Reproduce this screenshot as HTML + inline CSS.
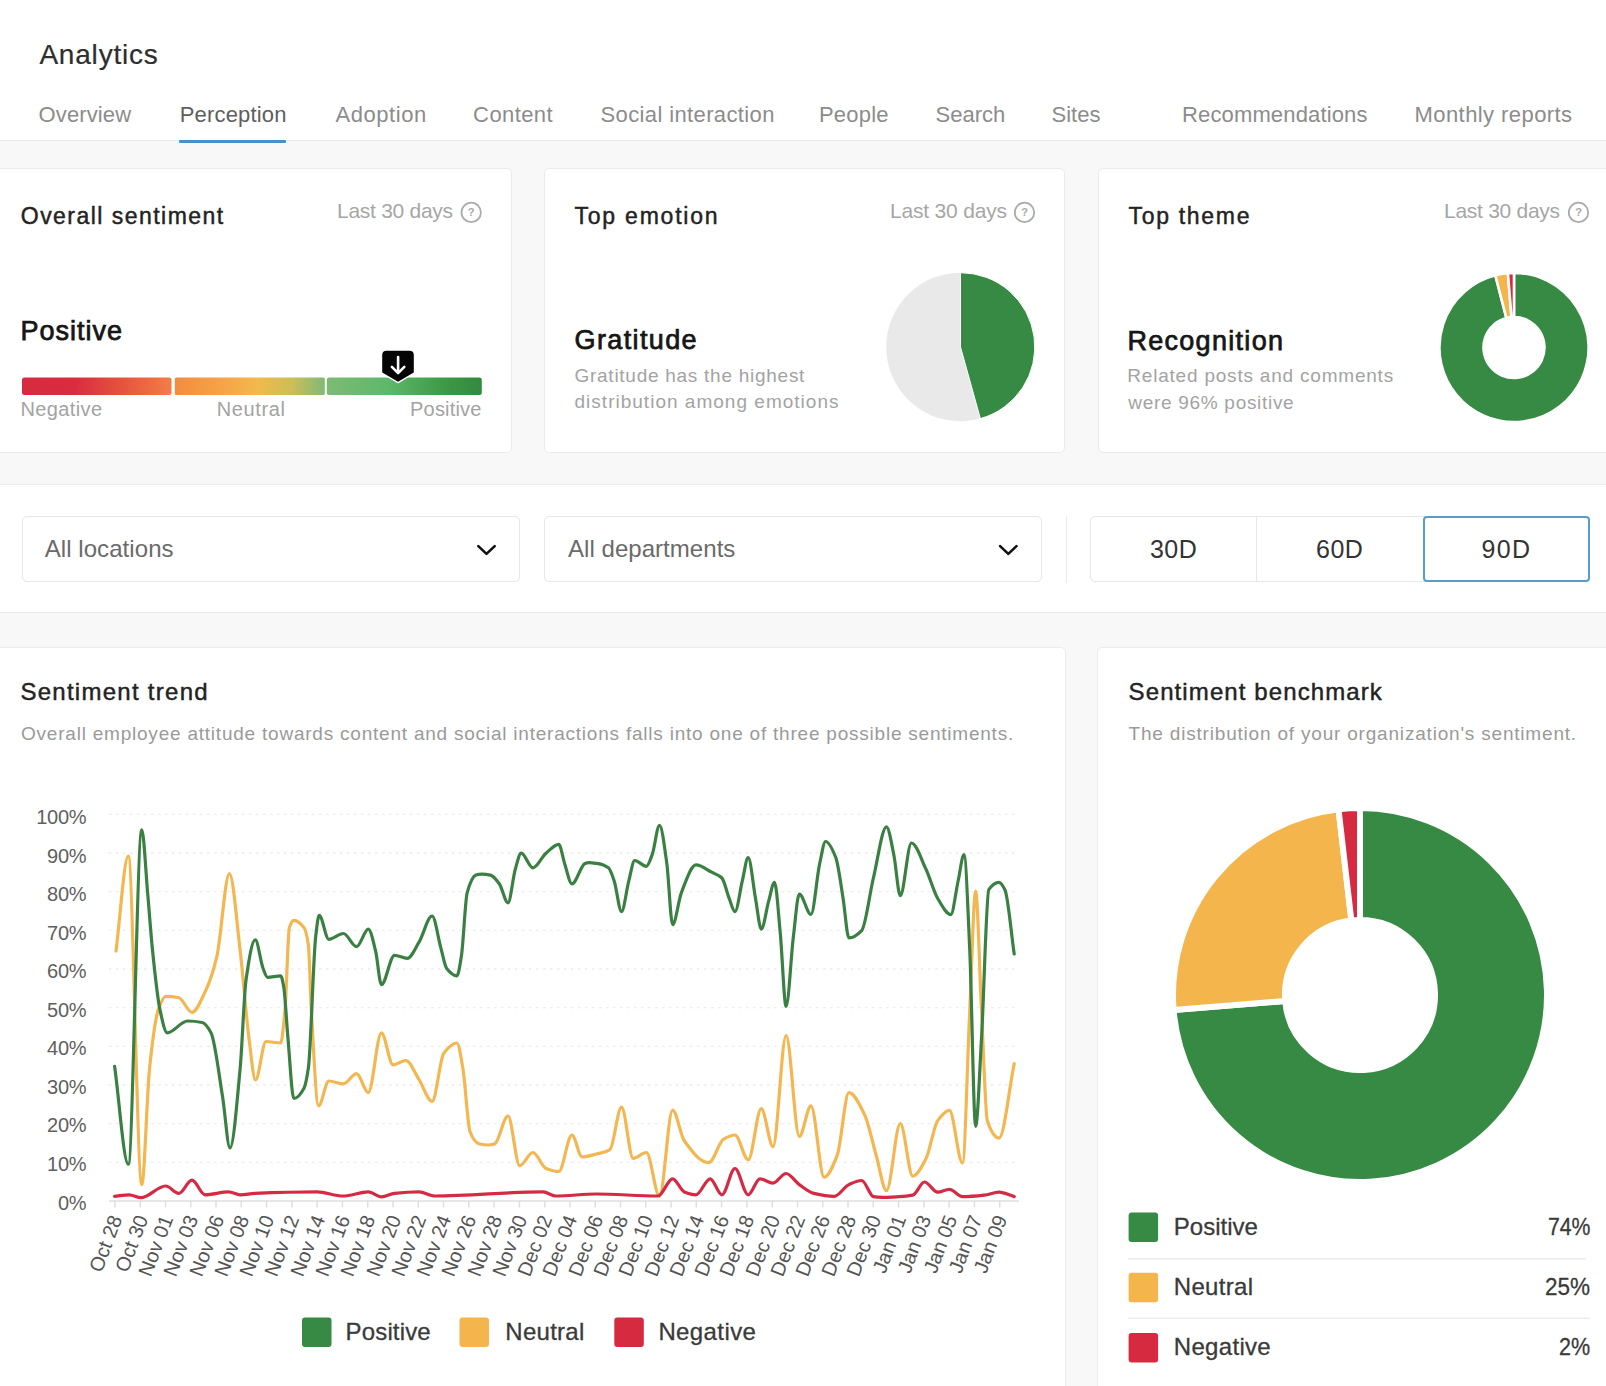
<!DOCTYPE html>
<html><head><meta charset="utf-8">
<style>
*{margin:0;padding:0;box-sizing:border-box}
html,body{width:1606px;height:1386px;overflow:hidden;background:#f8f8f8;font-family:"Liberation Sans",sans-serif}
.a{position:absolute}
.t{position:absolute;white-space:nowrap}
.card{position:absolute;background:#fff;border:1px solid #ebebeb;border-radius:5px}
svg{position:absolute;left:0;top:0;overflow:visible}
</style></head><body>

<div class="a" style="left:0;top:0;width:1606px;height:141px;background:#fff;border-bottom:1px solid #ececec"></div>
<div class="a" style="left:179px;top:140px;width:107px;height:3px;background:#4592c8;border-radius:1px"></div>
<div class="card" style="left:-8px;top:168px;width:520px;height:285px"></div>
<div class="card" style="left:544px;top:168px;width:521px;height:285px"></div>
<div class="card" style="left:1098px;top:168px;width:530px;height:285px"></div>
<div class="a" style="left:0;top:484px;width:1606px;height:129px;background:#fff;border-top:1px solid #ececec;border-bottom:1px solid #ececec"></div>
<div class="a" style="left:22px;top:516px;width:498px;height:66px;border:1px solid #e7e7e7;border-radius:5px"></div>
<div class="a" style="left:544px;top:516px;width:498px;height:66px;border:1px solid #e7e7e7;border-radius:5px"></div>
<div class="a" style="left:1066px;top:516px;width:1px;height:67px;background:#ebebeb"></div>
<div class="a" style="left:1090px;top:516px;width:500px;height:66px;border:1px solid #e7e7e7;border-radius:5px"></div>
<div class="a" style="left:1256px;top:517px;width:1px;height:64px;background:#e7e7e7"></div>
<div class="a" style="left:1423px;top:516px;width:167px;height:66px;border:2px solid #559ecb;border-radius:4px"></div>
<div class="card" style="left:-8px;top:647px;width:1074px;height:770px"></div>
<div class="card" style="left:1097px;top:647px;width:530px;height:770px"></div>
<svg width="1606" height="1386" viewBox="0 0 1606 1386">
<defs><linearGradient id="g1" x1="0" x2="1"><stop offset="0" stop-color="#d62a40"/><stop offset="0.35" stop-color="#d92c3f"/><stop offset="0.65" stop-color="#e5513c"/><stop offset="1" stop-color="#f47d47"/></linearGradient><linearGradient id="g2" x1="0" x2="1"><stop offset="0" stop-color="#f38c3f"/><stop offset="0.35" stop-color="#f5a64a"/><stop offset="0.55" stop-color="#f2b94c"/><stop offset="0.78" stop-color="#cdbd58"/><stop offset="1" stop-color="#80bb74"/></linearGradient><linearGradient id="g3" x1="0" x2="1"><stop offset="0" stop-color="#7dbb73"/><stop offset="0.4" stop-color="#5db86a"/><stop offset="0.75" stop-color="#3d9a46"/><stop offset="1" stop-color="#338a3e"/></linearGradient></defs>
<rect x="22" y="377.5" width="149.5" height="17.5" rx="2.5" fill="url(#g1)"/>
<rect x="174.8" y="377.5" width="150" height="17.5" rx="1.5" fill="url(#g2)"/>
<rect x="326.8" y="377.5" width="155" height="17.5" rx="2.5" fill="url(#g3)"/>
<path d="M386.5,350 H409.5 Q414.5,350 414.5,355 V372.9 L398.1,382.6 L381.5,372.9 V355 Q381.5,350 386.5,350 Z" fill="#050505" stroke="#fff" stroke-width="1.4"/>
<path d="M398.1,357 V372.8 M391.9,366.9 L398.1,373.1 L404.3,366.9" fill="none" stroke="#fff" stroke-width="2.6" stroke-linecap="round" stroke-linejoin="round"/>
<circle cx="471.2" cy="212.4" r="9.7" fill="none" stroke="#ababab" stroke-width="1.8"/>
<text x="471.2" y="216.3" font-size="11" font-weight="bold" fill="#a8a8a8" text-anchor="middle" font-family="Liberation Sans">?</text>
<circle cx="1024.5" cy="212.4" r="9.7" fill="none" stroke="#ababab" stroke-width="1.8"/>
<text x="1024.5" y="216.3" font-size="11" font-weight="bold" fill="#a8a8a8" text-anchor="middle" font-family="Liberation Sans">?</text>
<circle cx="1578.5" cy="212.4" r="9.7" fill="none" stroke="#ababab" stroke-width="1.8"/>
<text x="1578.5" y="216.3" font-size="11" font-weight="bold" fill="#a8a8a8" text-anchor="middle" font-family="Liberation Sans">?</text>
<circle cx="960.5" cy="347" r="74.3" fill="#e9e9e9"/>
<path d="M960.5,347 L960.50,272.70 A74.3,74.3 0 0 1 980.36,418.60 Z" fill="#368a43" stroke="#fff" stroke-width="1"/>
<path d="M1514.00,272.90 A74.6,74.6 0 1 1 1495.32,275.28 L1506.36,317.97 A30.5,30.5 0 1 0 1514.00,317.00 Z" fill="#368a43" stroke="#fff" stroke-width="2.6" stroke-linejoin="round"/>
<path d="M1495.32,275.28 A74.6,74.6 0 0 1 1507.89,273.15 L1511.50,317.10 A30.5,30.5 0 0 0 1506.36,317.97 Z" fill="#f4b64c" stroke="#fff" stroke-width="2.6" stroke-linejoin="round"/>
<path d="M1507.89,273.15 A74.6,74.6 0 0 1 1514.00,272.90 L1514.00,317.00 A30.5,30.5 0 0 0 1511.50,317.10 Z" fill="#d62a40" stroke="#fff" stroke-width="2.6" stroke-linejoin="round"/>
<path d="M478.3,546.1 L486.5,553.9 L494.7,546.1" fill="none" stroke="#111" stroke-width="2.6" stroke-linecap="round" stroke-linejoin="round"/>
<path d="M1000.0999999999999,546.1 L1008.3,553.9 L1016.5,546.1" fill="none" stroke="#111" stroke-width="2.6" stroke-linecap="round" stroke-linejoin="round"/>
<path d="M1360.00,808.00 A187,187 0 1 1 1173.60,1010.00 L1285.24,1001.01 A75,75 0 1 0 1360.00,920.00 Z" fill="#368a43" stroke="#fff" stroke-width="6" stroke-linejoin="round"/>
<path d="M1173.60,1010.00 A187,187 0 0 1 1338.51,809.24 L1351.38,920.50 A75,75 0 0 0 1285.24,1001.01 Z" fill="#f4b64c" stroke="#fff" stroke-width="6" stroke-linejoin="round"/>
<path d="M1338.51,809.24 A187,187 0 0 1 1360.00,808.00 L1360.00,920.00 A75,75 0 0 0 1351.38,920.50 Z" fill="#d62a40" stroke="#fff" stroke-width="6" stroke-linejoin="round"/>
<rect x="302" y="1317.6" width="29.5" height="29.5" rx="3" fill="#368a43"/>
<rect x="459.5" y="1317.6" width="29.5" height="29.5" rx="3" fill="#f4b64c"/>
<rect x="614.3" y="1317.6" width="29.5" height="29.5" rx="3" fill="#d62a40"/>
<rect x="1128.6" y="1212.5" width="29.5" height="29.5" rx="3" fill="#368a43"/>
<rect x="1128.6" y="1272.8" width="29.5" height="29.5" rx="3" fill="#f4b64c"/>
<rect x="1128.6" y="1333" width="29.5" height="29.5" rx="3" fill="#d62a40"/>
<rect x="1128" y="1258" width="458" height="1.5" fill="#ececec"/>
<rect x="1128" y="1317.5" width="462" height="1.5" fill="#ececec"/>
<line x1="109" y1="814.3" x2="1017" y2="814.3" stroke="#ececec" stroke-width="1.3" stroke-dasharray="2.5 4.5"/>
<line x1="109" y1="853.0" x2="1017" y2="853.0" stroke="#ececec" stroke-width="1.3" stroke-dasharray="2.5 4.5"/>
<line x1="109" y1="891.6" x2="1017" y2="891.6" stroke="#ececec" stroke-width="1.3" stroke-dasharray="2.5 4.5"/>
<line x1="109" y1="930.3" x2="1017" y2="930.3" stroke="#ececec" stroke-width="1.3" stroke-dasharray="2.5 4.5"/>
<line x1="109" y1="969.0" x2="1017" y2="969.0" stroke="#ececec" stroke-width="1.3" stroke-dasharray="2.5 4.5"/>
<line x1="109" y1="1007.6" x2="1017" y2="1007.6" stroke="#ececec" stroke-width="1.3" stroke-dasharray="2.5 4.5"/>
<line x1="109" y1="1046.3" x2="1017" y2="1046.3" stroke="#ececec" stroke-width="1.3" stroke-dasharray="2.5 4.5"/>
<line x1="109" y1="1085.0" x2="1017" y2="1085.0" stroke="#ececec" stroke-width="1.3" stroke-dasharray="2.5 4.5"/>
<line x1="109" y1="1123.7" x2="1017" y2="1123.7" stroke="#ececec" stroke-width="1.3" stroke-dasharray="2.5 4.5"/>
<line x1="109" y1="1162.3" x2="1017" y2="1162.3" stroke="#ececec" stroke-width="1.3" stroke-dasharray="2.5 4.5"/>
<line x1="109" y1="1201" x2="1019" y2="1201" stroke="#dedede" stroke-width="1.5"/>
<line x1="114.9" y1="1201" x2="114.9" y2="1207.5" stroke="#dedede" stroke-width="1.5"/>
<line x1="140.2" y1="1201" x2="140.2" y2="1207.5" stroke="#dedede" stroke-width="1.5"/>
<line x1="165.5" y1="1201" x2="165.5" y2="1207.5" stroke="#dedede" stroke-width="1.5"/>
<line x1="190.7" y1="1201" x2="190.7" y2="1207.5" stroke="#dedede" stroke-width="1.5"/>
<line x1="216.0" y1="1201" x2="216.0" y2="1207.5" stroke="#dedede" stroke-width="1.5"/>
<line x1="241.3" y1="1201" x2="241.3" y2="1207.5" stroke="#dedede" stroke-width="1.5"/>
<line x1="266.6" y1="1201" x2="266.6" y2="1207.5" stroke="#dedede" stroke-width="1.5"/>
<line x1="291.9" y1="1201" x2="291.9" y2="1207.5" stroke="#dedede" stroke-width="1.5"/>
<line x1="317.1" y1="1201" x2="317.1" y2="1207.5" stroke="#dedede" stroke-width="1.5"/>
<line x1="342.4" y1="1201" x2="342.4" y2="1207.5" stroke="#dedede" stroke-width="1.5"/>
<line x1="367.7" y1="1201" x2="367.7" y2="1207.5" stroke="#dedede" stroke-width="1.5"/>
<line x1="393.0" y1="1201" x2="393.0" y2="1207.5" stroke="#dedede" stroke-width="1.5"/>
<line x1="418.3" y1="1201" x2="418.3" y2="1207.5" stroke="#dedede" stroke-width="1.5"/>
<line x1="443.5" y1="1201" x2="443.5" y2="1207.5" stroke="#dedede" stroke-width="1.5"/>
<line x1="468.8" y1="1201" x2="468.8" y2="1207.5" stroke="#dedede" stroke-width="1.5"/>
<line x1="494.1" y1="1201" x2="494.1" y2="1207.5" stroke="#dedede" stroke-width="1.5"/>
<line x1="519.4" y1="1201" x2="519.4" y2="1207.5" stroke="#dedede" stroke-width="1.5"/>
<line x1="544.7" y1="1201" x2="544.7" y2="1207.5" stroke="#dedede" stroke-width="1.5"/>
<line x1="569.9" y1="1201" x2="569.9" y2="1207.5" stroke="#dedede" stroke-width="1.5"/>
<line x1="595.2" y1="1201" x2="595.2" y2="1207.5" stroke="#dedede" stroke-width="1.5"/>
<line x1="620.5" y1="1201" x2="620.5" y2="1207.5" stroke="#dedede" stroke-width="1.5"/>
<line x1="645.8" y1="1201" x2="645.8" y2="1207.5" stroke="#dedede" stroke-width="1.5"/>
<line x1="671.1" y1="1201" x2="671.1" y2="1207.5" stroke="#dedede" stroke-width="1.5"/>
<line x1="696.3" y1="1201" x2="696.3" y2="1207.5" stroke="#dedede" stroke-width="1.5"/>
<line x1="721.6" y1="1201" x2="721.6" y2="1207.5" stroke="#dedede" stroke-width="1.5"/>
<line x1="746.9" y1="1201" x2="746.9" y2="1207.5" stroke="#dedede" stroke-width="1.5"/>
<line x1="772.2" y1="1201" x2="772.2" y2="1207.5" stroke="#dedede" stroke-width="1.5"/>
<line x1="797.5" y1="1201" x2="797.5" y2="1207.5" stroke="#dedede" stroke-width="1.5"/>
<line x1="822.7" y1="1201" x2="822.7" y2="1207.5" stroke="#dedede" stroke-width="1.5"/>
<line x1="848.0" y1="1201" x2="848.0" y2="1207.5" stroke="#dedede" stroke-width="1.5"/>
<line x1="873.3" y1="1201" x2="873.3" y2="1207.5" stroke="#dedede" stroke-width="1.5"/>
<line x1="898.6" y1="1201" x2="898.6" y2="1207.5" stroke="#dedede" stroke-width="1.5"/>
<line x1="923.9" y1="1201" x2="923.9" y2="1207.5" stroke="#dedede" stroke-width="1.5"/>
<line x1="949.1" y1="1201" x2="949.1" y2="1207.5" stroke="#dedede" stroke-width="1.5"/>
<line x1="974.4" y1="1201" x2="974.4" y2="1207.5" stroke="#dedede" stroke-width="1.5"/>
<line x1="999.7" y1="1201" x2="999.7" y2="1207.5" stroke="#dedede" stroke-width="1.5"/>
<path d="M116.0,951.0 C120.1,919.4 124.2,856.1 128.3,856.1 C132.8,856.1 137.3,1184.6 141.8,1184.6 C144.4,1184.6 147.0,1091.9 149.6,1067.8 C152.5,1040.6 155.5,1017.5 158.4,1009.4 C160.8,1002.6 163.3,996.3 165.7,996.3 C170.1,996.3 174.4,996.8 178.8,997.7 C183.2,998.6 187.6,1012.3 192.0,1012.3 C196.4,1012.3 200.7,1000.9 205.1,991.9 C209.0,983.9 212.9,972.8 216.8,956.8 C221.0,939.6 225.2,873.6 229.4,873.6 C233.0,873.6 236.6,920.8 240.2,951.0 C243.1,975.6 246.1,1016.1 249.0,1038.6 C251.2,1055.2 253.3,1080.0 255.5,1080.0 C259.0,1080.0 262.5,1041.5 266.0,1041.5 C270.9,1041.5 275.8,1043.0 280.7,1043.0 C282.1,1043.0 283.6,1025.1 285.0,1009.4 C286.5,993.3 287.9,932.1 289.4,927.6 C290.9,923.1 292.3,920.3 293.8,920.3 C297.2,920.3 300.6,923.1 304.0,927.6 C305.5,929.6 306.9,934.8 308.4,945.2 C309.4,952.1 310.3,992.8 311.3,1009.4 C313.7,1051.2 316.2,1105.8 318.6,1105.8 C322.0,1105.8 325.4,1081.0 328.8,1081.0 C333.7,1081.0 338.5,1083.9 343.4,1083.9 C347.8,1083.9 352.2,1073.6 356.6,1073.6 C360.5,1073.6 364.4,1092.6 368.3,1092.6 C372.7,1092.6 377.0,1032.8 381.4,1032.8 C385.3,1032.8 389.2,1064.9 393.1,1064.9 C397.3,1064.9 401.6,1060.5 405.8,1060.5 C410.2,1060.5 414.6,1072.7 419.0,1079.5 C423.4,1086.3 427.7,1101.4 432.1,1101.4 C436.0,1101.4 439.9,1058.4 443.8,1053.2 C448.2,1047.4 452.5,1043.0 456.9,1043.0 C458.9,1043.0 460.8,1056.8 462.8,1067.8 C465.2,1081.5 467.7,1126.2 470.1,1132.0 C473.0,1138.9 475.9,1143.0 478.8,1143.7 C484.2,1145.0 489.5,1146.2 494.9,1143.7 C499.3,1141.6 503.6,1116.0 508.0,1116.0 C511.9,1116.0 515.8,1165.6 519.7,1165.6 C524.1,1165.6 528.5,1152.5 532.9,1152.5 C537.3,1152.5 541.6,1166.8 546.0,1168.5 C550.3,1170.2 554.5,1171.5 558.8,1171.5 C563.2,1171.5 567.5,1135.0 571.9,1135.0 C575.3,1135.0 578.7,1156.9 582.1,1156.9 C587.0,1156.9 591.8,1155.2 596.7,1154.0 C601.1,1152.9 605.5,1152.3 609.9,1149.6 C613.8,1147.2 617.6,1107.2 621.5,1107.2 C625.4,1107.2 629.3,1158.3 633.2,1158.3 C637.6,1158.3 642.0,1152.5 646.4,1152.5 C650.8,1152.5 655.1,1196.3 659.5,1196.3 C663.9,1196.3 668.2,1110.1 672.6,1110.1 C676.5,1110.1 680.4,1135.3 684.3,1140.8 C692.5,1152.4 700.6,1162.7 708.8,1162.7 C713.7,1162.7 718.5,1142.2 723.4,1139.3 C727.3,1137.0 731.1,1135.0 735.0,1135.0 C739.4,1135.0 743.8,1159.8 748.2,1159.8 C752.6,1159.8 756.9,1108.7 761.3,1108.7 C765.2,1108.7 769.1,1146.6 773.0,1146.6 C777.4,1146.6 781.7,1035.7 786.1,1035.7 C790.5,1035.7 794.9,1136.4 799.3,1136.4 C803.2,1136.4 807.1,1105.8 811.0,1105.8 C815.4,1105.8 819.7,1177.3 824.1,1177.3 C828.5,1177.3 832.8,1166.6 837.2,1155.4 C841.1,1145.4 845.0,1092.6 848.9,1092.6 C854.1,1092.6 859.4,1104.0 864.6,1114.7 C868.5,1122.7 872.4,1142.2 876.3,1155.7 C879.7,1167.5 883.1,1190.7 886.5,1190.7 C891.1,1190.7 895.7,1123.5 900.3,1123.5 C904.5,1123.5 908.6,1176.1 912.8,1176.1 C917.2,1176.1 921.6,1167.0 926.0,1158.6 C929.9,1151.2 933.8,1126.0 937.7,1120.6 C941.6,1115.2 945.5,1110.4 949.4,1110.4 C953.8,1110.4 958.1,1163.0 962.5,1163.0 C964.9,1163.0 967.4,1059.9 969.8,1009.5 C971.7,969.5 973.7,891.2 975.6,891.2 C977.6,891.2 979.5,971.0 981.5,1009.5 C983.4,1047.4 985.4,1114.7 987.3,1120.6 C991.2,1132.6 995.1,1138.1 999.0,1138.1 C1004.1,1138.1 1009.1,1088.4 1014.2,1063.6" fill="none" stroke="#f3b650" stroke-width="3.2" stroke-linejoin="round" stroke-linecap="round"/>
<path d="M114.6,1066.3 C119.2,1098.9 123.7,1164.2 128.3,1164.2 C132.8,1164.2 137.3,829.8 141.8,829.8 C143.7,829.8 145.7,870.9 147.6,892.6 C149.3,911.3 150.9,935.0 152.6,951.0 C155.0,974.4 157.5,998.3 159.9,1009.4 C162.3,1020.5 164.8,1032.8 167.2,1032.8 C174.0,1032.8 180.8,1021.0 187.6,1021.0 C192.5,1021.0 197.3,1021.5 202.2,1022.5 C205.1,1023.1 208.1,1027.3 211.0,1032.8 C214.9,1040.1 218.7,1073.1 222.6,1097.0 C225.1,1112.3 227.5,1148.0 230.0,1148.0 C233.4,1148.0 236.8,1104.0 240.2,1067.8 C242.1,1047.2 244.1,993.8 246.0,980.2 C249.1,958.4 252.2,939.9 255.3,939.9 C257.9,939.9 260.5,961.9 263.1,968.5 C264.6,972.2 266.0,977.3 267.5,977.3 C271.9,977.3 276.3,975.8 280.7,975.8 C281.7,975.8 282.6,980.9 283.6,986.0 C285.1,993.7 286.5,1022.3 288.0,1038.6 C289.9,1060.1 291.9,1098.5 293.8,1098.5 C297.2,1098.5 300.6,1094.4 304.0,1088.2 C305.5,1085.5 306.9,1078.1 308.4,1067.8 C310.8,1050.7 313.3,957.1 315.7,936.4 C316.9,926.5 318.0,915.4 319.2,915.4 C322.4,915.4 325.6,939.3 328.8,939.3 C333.7,939.3 338.5,933.5 343.4,933.5 C347.8,933.5 352.2,946.6 356.6,946.6 C360.5,946.6 364.4,929.1 368.3,929.1 C370.7,929.1 373.2,941.3 375.6,951.0 C377.5,958.7 379.5,984.6 381.4,984.6 C385.8,984.6 390.1,955.4 394.5,955.4 C398.8,955.4 403.0,958.3 407.3,958.3 C411.2,958.3 415.1,948.5 419.0,942.2 C423.4,935.1 427.7,916.0 432.1,916.0 C435.0,916.0 438.0,937.6 440.9,948.1 C442.8,955.0 444.8,966.1 446.7,968.5 C450.1,972.8 453.5,975.8 456.9,975.8 C458.4,975.8 459.8,965.7 461.3,956.8 C463.3,944.9 465.2,899.6 467.2,892.6 C470.1,882.3 473.0,876.2 475.9,875.1 C480.8,873.3 485.6,874.2 490.5,875.1 C493.4,875.6 496.4,879.8 499.3,883.8 C502.2,887.8 505.1,902.8 508.0,902.8 C510.4,902.8 512.9,877.4 515.3,869.2 C517.3,862.5 519.2,853.2 521.2,853.2 C525.1,853.2 529.0,867.8 532.9,867.8 C537.3,867.8 541.6,856.9 546.0,853.2 C550.3,849.6 554.5,844.4 558.8,844.4 C560.7,844.4 562.7,857.6 564.6,863.4 C567.0,870.8 569.5,883.8 571.9,883.8 C576.3,883.8 580.6,865.2 585.0,863.4 C588.9,861.8 592.8,863.0 596.7,863.4 C600.6,863.8 604.5,865.1 608.4,867.8 C610.3,869.2 612.3,875.3 614.2,880.9 C616.6,888.0 619.1,911.6 621.5,911.6 C623.9,911.6 626.4,890.1 628.8,880.9 C630.8,873.5 632.7,860.5 634.7,860.5 C638.6,860.5 642.5,866.3 646.4,866.3 C648.3,866.3 650.3,859.7 652.2,854.6 C654.6,848.2 657.1,825.4 659.5,825.4 C661.9,825.4 664.4,846.2 666.8,863.4 C668.7,877.1 670.7,924.7 672.6,924.7 C675.5,924.7 678.5,900.1 681.4,892.6 C686.3,880.1 691.1,864.9 696.0,864.9 C701.2,864.9 706.5,869.5 711.7,872.2 C715.1,874.0 718.5,874.7 721.9,878.0 C724.3,880.4 726.8,892.3 729.2,898.4 C731.1,903.2 733.1,911.6 735.0,911.6 C737.4,911.6 739.9,890.8 742.3,880.9 C744.3,872.9 746.2,857.6 748.2,857.6 C750.6,857.6 753.1,885.2 755.5,898.4 C757.4,908.9 759.4,929.1 761.3,929.1 C763.7,929.1 766.2,909.9 768.6,901.4 C770.6,894.6 772.5,882.4 774.5,882.4 C776.4,882.4 778.4,913.5 780.3,933.5 C782.2,953.5 784.2,1006.5 786.1,1006.5 C788.5,1006.5 791.0,956.3 793.4,936.4 C795.4,920.3 797.3,894.1 799.3,894.1 C803.2,894.1 807.1,914.5 811.0,914.5 C813.9,914.5 816.8,876.4 819.7,863.4 C821.7,854.6 823.6,841.5 825.6,841.5 C829.0,841.5 832.4,849.0 835.8,857.6 C838.2,863.8 840.7,883.4 843.1,898.4 C845.0,910.3 847.0,937.9 848.9,937.9 C853.2,937.9 857.4,935.0 861.7,930.6 C865.6,926.6 869.5,894.3 873.4,878.0 C877.8,859.7 882.1,826.9 886.5,826.9 C888.9,826.9 891.4,843.1 893.8,854.7 C896.0,865.0 898.1,895.6 900.3,895.6 C904.0,895.6 907.7,843.0 911.4,843.0 C916.3,843.0 921.1,859.1 926.0,869.3 C929.9,877.5 933.8,892.0 937.7,898.5 C942.1,905.7 946.4,914.6 950.8,914.6 C953.2,914.6 955.7,892.0 958.1,881.0 C960.1,872.1 962.0,854.7 964.0,854.7 C965.9,854.7 967.9,909.6 969.8,951.1 C971.7,992.6 973.7,1126.4 975.6,1126.4 C977.6,1126.4 979.5,1072.4 981.5,1038.8 C983.9,997.2 986.4,893.2 988.8,889.7 C992.2,884.7 995.6,882.4 999.0,882.4 C1001.0,882.4 1002.9,885.8 1004.9,889.7 C1008.0,895.9 1011.1,932.6 1014.2,954.0" fill="none" stroke="#3a8043" stroke-width="3.2" stroke-linejoin="round" stroke-linecap="round"/>
<path d="M114.6,1196.3 C119.5,1195.8 124.3,1194.8 129.2,1194.8 C133.1,1194.8 137.0,1197.7 140.9,1197.7 C149.2,1197.7 157.4,1186.0 165.7,1186.0 C170.1,1186.0 174.4,1193.4 178.8,1193.4 C183.2,1193.4 187.6,1180.2 192.0,1180.2 C196.4,1180.2 200.7,1194.8 205.1,1194.8 C212.9,1194.8 220.7,1191.9 228.5,1191.9 C232.4,1191.9 236.3,1194.8 240.2,1194.8 C245.1,1194.8 249.9,1193.6 254.8,1193.4 C275.6,1192.5 296.4,1191.9 317.2,1191.9 C325.8,1191.9 334.4,1196.0 343.0,1196.0 C351.4,1196.0 359.9,1191.9 368.3,1191.9 C372.7,1191.9 377.0,1196.9 381.4,1196.9 C385.8,1196.9 390.1,1193.9 394.5,1193.4 C402.7,1192.5 410.8,1191.9 419.0,1191.9 C424.3,1191.9 429.7,1196.0 435.0,1196.0 C471.0,1196.0 507.0,1191.9 543.0,1191.9 C547.3,1191.9 551.7,1196.0 556.0,1196.0 C569.3,1196.0 582.7,1194.0 596.0,1194.0 C616.7,1194.0 637.3,1196.0 658.0,1196.0 C662.9,1196.0 667.7,1178.8 672.6,1178.8 C676.5,1178.8 680.4,1190.3 684.3,1191.9 C688.2,1193.5 692.1,1194.8 696.0,1194.8 C700.7,1194.8 705.5,1178.8 710.2,1178.8 C714.1,1178.8 718.0,1194.8 721.9,1194.8 C726.3,1194.8 730.6,1168.5 735.0,1168.5 C739.4,1168.5 743.8,1194.8 748.2,1194.8 C752.1,1194.8 756.0,1178.8 759.9,1178.8 C764.3,1178.8 768.6,1183.1 773.0,1183.1 C777.4,1183.1 781.7,1173.5 786.1,1173.5 C790.5,1173.5 794.9,1181.5 799.3,1184.6 C804.2,1188.0 809.0,1192.2 813.9,1193.4 C820.7,1195.0 827.5,1196.3 834.3,1196.3 C839.2,1196.3 844.0,1186.8 848.9,1184.6 C853.2,1182.7 857.4,1180.5 861.7,1180.5 C865.6,1180.5 869.5,1195.8 873.4,1196.6 C882.2,1198.5 890.9,1196.8 899.7,1196.6 C904.1,1196.5 908.4,1196.0 912.8,1195.1 C916.7,1194.3 920.6,1182.0 924.5,1182.0 C928.9,1182.0 933.3,1192.2 937.7,1192.2 C941.6,1192.2 945.5,1189.3 949.4,1189.3 C953.8,1189.3 958.1,1196.6 962.5,1196.6 C969.8,1196.6 977.1,1195.9 984.4,1195.1 C989.3,1194.6 994.1,1192.2 999.0,1192.2 C1004.1,1192.2 1009.1,1195.1 1014.2,1196.6" fill="none" stroke="#d42a44" stroke-width="3.2" stroke-linejoin="round" stroke-linecap="round"/>
</svg>
<div class="t" style="left:-83.6px;top:1205.0px;width:200px;height:22px;text-align:right;font-size:20px;line-height:22px;letter-spacing:0.0px;color:#555;transform-origin:100% 50%;transform:rotate(-69deg)">Oct 28</div>
<div class="t" style="left:-58.3px;top:1205.0px;width:200px;height:22px;text-align:right;font-size:20px;line-height:22px;letter-spacing:0.0px;color:#555;transform-origin:100% 50%;transform:rotate(-69deg)">Oct 30</div>
<div class="t" style="left:-33.0px;top:1205.0px;width:200px;height:22px;text-align:right;font-size:20px;line-height:22px;letter-spacing:0.0px;color:#555;transform-origin:100% 50%;transform:rotate(-69deg)">Nov 01</div>
<div class="t" style="left:-7.8px;top:1205.0px;width:200px;height:22px;text-align:right;font-size:20px;line-height:22px;letter-spacing:0.0px;color:#555;transform-origin:100% 50%;transform:rotate(-69deg)">Nov 03</div>
<div class="t" style="left:17.5px;top:1205.0px;width:200px;height:22px;text-align:right;font-size:20px;line-height:22px;letter-spacing:0.0px;color:#555;transform-origin:100% 50%;transform:rotate(-69deg)">Nov 06</div>
<div class="t" style="left:42.8px;top:1205.0px;width:200px;height:22px;text-align:right;font-size:20px;line-height:22px;letter-spacing:0.0px;color:#555;transform-origin:100% 50%;transform:rotate(-69deg)">Nov 08</div>
<div class="t" style="left:68.1px;top:1205.0px;width:200px;height:22px;text-align:right;font-size:20px;line-height:22px;letter-spacing:0.0px;color:#555;transform-origin:100% 50%;transform:rotate(-69deg)">Nov 10</div>
<div class="t" style="left:93.4px;top:1205.0px;width:200px;height:22px;text-align:right;font-size:20px;line-height:22px;letter-spacing:0.0px;color:#555;transform-origin:100% 50%;transform:rotate(-69deg)">Nov 12</div>
<div class="t" style="left:118.6px;top:1205.0px;width:200px;height:22px;text-align:right;font-size:20px;line-height:22px;letter-spacing:0.0px;color:#555;transform-origin:100% 50%;transform:rotate(-69deg)">Nov 14</div>
<div class="t" style="left:143.9px;top:1205.0px;width:200px;height:22px;text-align:right;font-size:20px;line-height:22px;letter-spacing:0.0px;color:#555;transform-origin:100% 50%;transform:rotate(-69deg)">Nov 16</div>
<div class="t" style="left:169.2px;top:1205.0px;width:200px;height:22px;text-align:right;font-size:20px;line-height:22px;letter-spacing:0.0px;color:#555;transform-origin:100% 50%;transform:rotate(-69deg)">Nov 18</div>
<div class="t" style="left:194.5px;top:1205.0px;width:200px;height:22px;text-align:right;font-size:20px;line-height:22px;letter-spacing:0.0px;color:#555;transform-origin:100% 50%;transform:rotate(-69deg)">Nov 20</div>
<div class="t" style="left:219.8px;top:1205.0px;width:200px;height:22px;text-align:right;font-size:20px;line-height:22px;letter-spacing:0.0px;color:#555;transform-origin:100% 50%;transform:rotate(-69deg)">Nov 22</div>
<div class="t" style="left:245.0px;top:1205.0px;width:200px;height:22px;text-align:right;font-size:20px;line-height:22px;letter-spacing:0.0px;color:#555;transform-origin:100% 50%;transform:rotate(-69deg)">Nov 24</div>
<div class="t" style="left:270.3px;top:1205.0px;width:200px;height:22px;text-align:right;font-size:20px;line-height:22px;letter-spacing:0.0px;color:#555;transform-origin:100% 50%;transform:rotate(-69deg)">Nov 26</div>
<div class="t" style="left:295.6px;top:1205.0px;width:200px;height:22px;text-align:right;font-size:20px;line-height:22px;letter-spacing:0.0px;color:#555;transform-origin:100% 50%;transform:rotate(-69deg)">Nov 28</div>
<div class="t" style="left:320.9px;top:1205.0px;width:200px;height:22px;text-align:right;font-size:20px;line-height:22px;letter-spacing:0.0px;color:#555;transform-origin:100% 50%;transform:rotate(-69deg)">Nov 30</div>
<div class="t" style="left:346.2px;top:1205.0px;width:200px;height:22px;text-align:right;font-size:20px;line-height:22px;letter-spacing:0.0px;color:#555;transform-origin:100% 50%;transform:rotate(-69deg)">Dec 02</div>
<div class="t" style="left:371.4px;top:1205.0px;width:200px;height:22px;text-align:right;font-size:20px;line-height:22px;letter-spacing:0.0px;color:#555;transform-origin:100% 50%;transform:rotate(-69deg)">Dec 04</div>
<div class="t" style="left:396.7px;top:1205.0px;width:200px;height:22px;text-align:right;font-size:20px;line-height:22px;letter-spacing:0.0px;color:#555;transform-origin:100% 50%;transform:rotate(-69deg)">Dec 06</div>
<div class="t" style="left:422.0px;top:1205.0px;width:200px;height:22px;text-align:right;font-size:20px;line-height:22px;letter-spacing:0.0px;color:#555;transform-origin:100% 50%;transform:rotate(-69deg)">Dec 08</div>
<div class="t" style="left:447.3px;top:1205.0px;width:200px;height:22px;text-align:right;font-size:20px;line-height:22px;letter-spacing:0.0px;color:#555;transform-origin:100% 50%;transform:rotate(-69deg)">Dec 10</div>
<div class="t" style="left:472.6px;top:1205.0px;width:200px;height:22px;text-align:right;font-size:20px;line-height:22px;letter-spacing:0.0px;color:#555;transform-origin:100% 50%;transform:rotate(-69deg)">Dec 12</div>
<div class="t" style="left:497.8px;top:1205.0px;width:200px;height:22px;text-align:right;font-size:20px;line-height:22px;letter-spacing:0.0px;color:#555;transform-origin:100% 50%;transform:rotate(-69deg)">Dec 14</div>
<div class="t" style="left:523.1px;top:1205.0px;width:200px;height:22px;text-align:right;font-size:20px;line-height:22px;letter-spacing:0.0px;color:#555;transform-origin:100% 50%;transform:rotate(-69deg)">Dec 16</div>
<div class="t" style="left:548.4px;top:1205.0px;width:200px;height:22px;text-align:right;font-size:20px;line-height:22px;letter-spacing:0.0px;color:#555;transform-origin:100% 50%;transform:rotate(-69deg)">Dec 18</div>
<div class="t" style="left:573.7px;top:1205.0px;width:200px;height:22px;text-align:right;font-size:20px;line-height:22px;letter-spacing:0.0px;color:#555;transform-origin:100% 50%;transform:rotate(-69deg)">Dec 20</div>
<div class="t" style="left:599.0px;top:1205.0px;width:200px;height:22px;text-align:right;font-size:20px;line-height:22px;letter-spacing:0.0px;color:#555;transform-origin:100% 50%;transform:rotate(-69deg)">Dec 22</div>
<div class="t" style="left:624.2px;top:1205.0px;width:200px;height:22px;text-align:right;font-size:20px;line-height:22px;letter-spacing:0.0px;color:#555;transform-origin:100% 50%;transform:rotate(-69deg)">Dec 26</div>
<div class="t" style="left:649.5px;top:1205.0px;width:200px;height:22px;text-align:right;font-size:20px;line-height:22px;letter-spacing:0.0px;color:#555;transform-origin:100% 50%;transform:rotate(-69deg)">Dec 28</div>
<div class="t" style="left:674.8px;top:1205.0px;width:200px;height:22px;text-align:right;font-size:20px;line-height:22px;letter-spacing:0.0px;color:#555;transform-origin:100% 50%;transform:rotate(-69deg)">Dec 30</div>
<div class="t" style="left:700.1px;top:1205.0px;width:200px;height:22px;text-align:right;font-size:20px;line-height:22px;letter-spacing:0.0px;color:#555;transform-origin:100% 50%;transform:rotate(-69deg)">Jan 01</div>
<div class="t" style="left:725.4px;top:1205.0px;width:200px;height:22px;text-align:right;font-size:20px;line-height:22px;letter-spacing:0.0px;color:#555;transform-origin:100% 50%;transform:rotate(-69deg)">Jan 03</div>
<div class="t" style="left:750.6px;top:1205.0px;width:200px;height:22px;text-align:right;font-size:20px;line-height:22px;letter-spacing:0.0px;color:#555;transform-origin:100% 50%;transform:rotate(-69deg)">Jan 05</div>
<div class="t" style="left:775.9px;top:1205.0px;width:200px;height:22px;text-align:right;font-size:20px;line-height:22px;letter-spacing:0.0px;color:#555;transform-origin:100% 50%;transform:rotate(-69deg)">Jan 07</div>
<div class="t" style="left:801.2px;top:1205.0px;width:200px;height:22px;text-align:right;font-size:20px;line-height:22px;letter-spacing:0.0px;color:#555;transform-origin:100% 50%;transform:rotate(-69deg)">Jan 09</div>
<div class="t" style="left:-13.8px;top:805.20px;width:100px;text-align:right;font-size:20px;line-height:24px;letter-spacing:-0.3px;color:#5f5f5f">100%</div>
<div class="t" style="left:-13.8px;top:843.73px;width:100px;text-align:right;font-size:20px;line-height:24px;letter-spacing:-0.3px;color:#5f5f5f">90%</div>
<div class="t" style="left:-13.8px;top:882.26px;width:100px;text-align:right;font-size:20px;line-height:24px;letter-spacing:-0.3px;color:#5f5f5f">80%</div>
<div class="t" style="left:-13.8px;top:920.79px;width:100px;text-align:right;font-size:20px;line-height:24px;letter-spacing:-0.3px;color:#5f5f5f">70%</div>
<div class="t" style="left:-13.8px;top:959.32px;width:100px;text-align:right;font-size:20px;line-height:24px;letter-spacing:-0.3px;color:#5f5f5f">60%</div>
<div class="t" style="left:-13.8px;top:997.85px;width:100px;text-align:right;font-size:20px;line-height:24px;letter-spacing:-0.3px;color:#5f5f5f">50%</div>
<div class="t" style="left:-13.8px;top:1036.38px;width:100px;text-align:right;font-size:20px;line-height:24px;letter-spacing:-0.3px;color:#5f5f5f">40%</div>
<div class="t" style="left:-13.8px;top:1074.91px;width:100px;text-align:right;font-size:20px;line-height:24px;letter-spacing:-0.3px;color:#5f5f5f">30%</div>
<div class="t" style="left:-13.8px;top:1113.44px;width:100px;text-align:right;font-size:20px;line-height:24px;letter-spacing:-0.3px;color:#5f5f5f">20%</div>
<div class="t" style="left:-13.8px;top:1151.97px;width:100px;text-align:right;font-size:20px;line-height:24px;letter-spacing:-0.3px;color:#5f5f5f">10%</div>
<div class="t" style="left:-13.8px;top:1190.50px;width:100px;text-align:right;font-size:20px;line-height:24px;letter-spacing:-0.3px;color:#5f5f5f">0%</div>
<div class="t" id="analytics" style="left:39.40px;top:38.02px;font-size:28px;line-height:34px;color:#2e2e2e;letter-spacing:0.800px;-webkit-text-stroke:0.2px #2e2e2e">Analytics</div>
<div class="t" id="t_over" style="left:38.60px;top:101.78px;font-size:22px;line-height:26px;color:#8c8c8c;letter-spacing:0.114px">Overview</div>
<div class="t" id="t_perc" style="left:179.70px;top:101.78px;font-size:22px;line-height:26px;color:#5e5e5e;letter-spacing:0.178px">Perception</div>
<div class="t" id="t_adop" style="left:335.50px;top:101.78px;font-size:22px;line-height:26px;color:#8c8c8c;letter-spacing:0.543px">Adoption</div>
<div class="t" id="t_cont" style="left:473.10px;top:102.00px;font-size:22px;line-height:26px;color:#8c8c8c;letter-spacing:0.400px">Content</div>
<div class="t" id="t_soc" style="left:600.50px;top:101.78px;font-size:22px;line-height:26px;color:#8c8c8c;letter-spacing:0.376px">Social interaction</div>
<div class="t" id="t_peop" style="left:819.00px;top:101.78px;font-size:22px;line-height:26px;color:#8c8c8c;letter-spacing:0.200px">People</div>
<div class="t" id="t_sear" style="left:935.50px;top:101.78px;font-size:22px;line-height:26px;color:#8c8c8c;letter-spacing:0.000px">Search</div>
<div class="t" id="t_site" style="left:1051.50px;top:101.78px;font-size:22px;line-height:26px;color:#8c8c8c;letter-spacing:0.000px">Sites</div>
<div class="t" id="t_reco" style="left:1182.00px;top:101.78px;font-size:22px;line-height:26px;color:#8c8c8c;letter-spacing:0.143px">Recommendations</div>
<div class="t" id="t_mont" style="left:1414.50px;top:101.78px;font-size:22px;line-height:26px;color:#8c8c8c;letter-spacing:0.429px">Monthly reports</div>
<div class="t" id="c1_ttl" style="left:20.80px;top:201.60px;font-size:23px;line-height:28px;color:#232323;letter-spacing:1.463px;-webkit-text-stroke:0.45px #232323">Overall sentiment</div>
<div class="t" id="c1_last" style="left:337.00px;top:198.04px;font-size:21px;line-height:25px;color:#a6a6a6;letter-spacing:-0.273px">Last 30 days</div>
<div class="t" id="c1_big" style="left:20.50px;top:314.88px;font-size:27px;line-height:32px;color:#161616;letter-spacing:1.000px;-webkit-text-stroke:0.75px #161616">Positive</div>
<div class="t" id="c1_neg" style="left:20.40px;top:397.20px;font-size:20px;line-height:24px;color:#a3a3a3;letter-spacing:0.400px">Negative</div>
<div class="t" id="c1_neu" style="left:216.80px;top:397.20px;font-size:20px;line-height:24px;color:#a3a3a3;letter-spacing:0.600px">Neutral</div>
<div class="t" id="c1_pos" style="left:410.10px;top:397.20px;font-size:20px;line-height:24px;color:#a3a3a3;letter-spacing:0.171px">Positive</div>
<div class="t" id="c2_ttl" style="left:574.50px;top:201.60px;font-size:23px;line-height:28px;color:#232323;letter-spacing:1.780px;-webkit-text-stroke:0.45px #232323">Top emotion</div>
<div class="t" id="c2_last" style="left:890.00px;top:198.04px;font-size:21px;line-height:25px;color:#a6a6a6;letter-spacing:-0.182px">Last 30 days</div>
<div class="t" id="c2_big" style="left:574.50px;top:324.38px;font-size:27px;line-height:32px;color:#161616;letter-spacing:1.375px;-webkit-text-stroke:0.75px #161616">Gratitude</div>
<div class="t" id="c2_d1" style="left:574.50px;top:364.36px;font-size:19px;line-height:23px;color:#a3a3a3;letter-spacing:0.733px">Gratitude has the highest</div>
<div class="t" id="c2_d2" style="left:574.50px;top:390.46px;font-size:19px;line-height:23px;color:#a3a3a3;letter-spacing:1.015px">distribution among emotions</div>
<div class="t" id="c3_ttl" style="left:1128.50px;top:201.60px;font-size:23px;line-height:28px;color:#232323;letter-spacing:1.700px;-webkit-text-stroke:0.45px #232323">Top theme</div>
<div class="t" id="c3_last" style="left:1444.00px;top:198.04px;font-size:21px;line-height:25px;color:#a6a6a6;letter-spacing:-0.273px">Last 30 days</div>
<div class="t" id="c3_big" style="left:1127.40px;top:324.98px;font-size:27px;line-height:32px;color:#161616;letter-spacing:1.300px;-webkit-text-stroke:0.75px #161616">Recognition</div>
<div class="t" id="c3_d1" style="left:1127.30px;top:364.36px;font-size:19px;line-height:23px;color:#a3a3a3;letter-spacing:0.792px">Related posts and comments</div>
<div class="t" id="c3_d2" style="left:1128.30px;top:390.76px;font-size:19px;line-height:23px;color:#a3a3a3;letter-spacing:0.700px">were 96% positive</div>
<div class="t" id="f_loc" style="left:44.70px;top:533.96px;font-size:24px;line-height:29px;color:#6a6a6a;letter-spacing:0.067px">All locations</div>
<div class="t" id="f_dep" style="left:568.00px;top:533.96px;font-size:24px;line-height:29px;color:#6a6a6a;letter-spacing:0.043px">All departments</div>
<div class="t" id="s30" style="left:1149.90px;top:533.50px;font-size:25px;line-height:30px;color:#333333;letter-spacing:0.500px">30D</div>
<div class="t" id="s60" style="left:1316.00px;top:533.50px;font-size:25px;line-height:30px;color:#333333;letter-spacing:0.500px">60D</div>
<div class="t" id="s90" style="left:1481.50px;top:533.50px;font-size:25px;line-height:30px;color:#333333;letter-spacing:1.300px">90D</div>
<div class="t" id="tr_ttl" style="left:20.40px;top:676.76px;font-size:24px;line-height:29px;color:#232323;letter-spacing:1.271px;-webkit-text-stroke:0.45px #232323">Sentiment trend</div>
<div class="t" id="tr_desc" style="left:21.00px;top:722.46px;font-size:19px;line-height:23px;color:#9a9a9a;letter-spacing:0.780px">Overall employee attitude towards content and social interactions falls into one of three possible sentiments.</div>
<div class="t" id="bm_ttl" style="left:1128.60px;top:677.06px;font-size:24px;line-height:29px;color:#232323;letter-spacing:1.100px;-webkit-text-stroke:0.45px #232323">Sentiment benchmark</div>
<div class="t" id="bm_desc" style="left:1128.60px;top:721.56px;font-size:19px;line-height:23px;color:#9a9a9a;letter-spacing:0.804px">The distribution of your organization's sentiment.</div>
<div class="t" id="lg_pos" style="left:345.60px;top:1316.76px;font-size:24px;line-height:29px;color:#3a3a3a;letter-spacing:0.143px;-webkit-text-stroke:0.3px #3a3a3a">Positive</div>
<div class="t" id="lg_neu" style="left:505.30px;top:1316.76px;font-size:24px;line-height:29px;color:#3a3a3a;letter-spacing:0.267px;-webkit-text-stroke:0.3px #3a3a3a">Neutral</div>
<div class="t" id="lg_neg" style="left:658.40px;top:1316.76px;font-size:24px;line-height:29px;color:#3a3a3a;letter-spacing:0.400px;-webkit-text-stroke:0.3px #3a3a3a">Negative</div>
<div class="t" id="bl_pos" style="left:1173.80px;top:1212.36px;font-size:24px;line-height:29px;color:#3a3a3a;letter-spacing:0.000px;-webkit-text-stroke:0.3px #3a3a3a">Positive</div>
<div class="t" id="bl_neu" style="left:1173.80px;top:1272.26px;font-size:24px;line-height:29px;color:#3a3a3a;letter-spacing:0.300px;-webkit-text-stroke:0.3px #3a3a3a">Neutral</div>
<div class="t" id="bl_neg" style="left:1173.80px;top:1332.26px;font-size:24px;line-height:29px;color:#3a3a3a;letter-spacing:0.314px;-webkit-text-stroke:0.3px #3a3a3a">Negative</div>
<div class="t" id="bp_pos" style="left:1547.50px;top:1212.36px;font-size:24px;line-height:29px;color:#3a3a3a;letter-spacing:0.000px;transform:scaleX(0.8845);transform-origin:0 0;-webkit-text-stroke:0.3px #3a3a3a">74%</div>
<div class="t" id="bp_neu" style="left:1545.00px;top:1272.26px;font-size:24px;line-height:29px;color:#3a3a3a;letter-spacing:0.000px;transform:scaleX(0.9377);transform-origin:0 0;-webkit-text-stroke:0.3px #3a3a3a">25%</div>
<div class="t" id="bp_neg" style="left:1558.50px;top:1332.26px;font-size:24px;line-height:29px;color:#3a3a3a;letter-spacing:0.000px;transform:scaleX(0.8973);transform-origin:0 0;-webkit-text-stroke:0.3px #3a3a3a">2%</div>
</body></html>
